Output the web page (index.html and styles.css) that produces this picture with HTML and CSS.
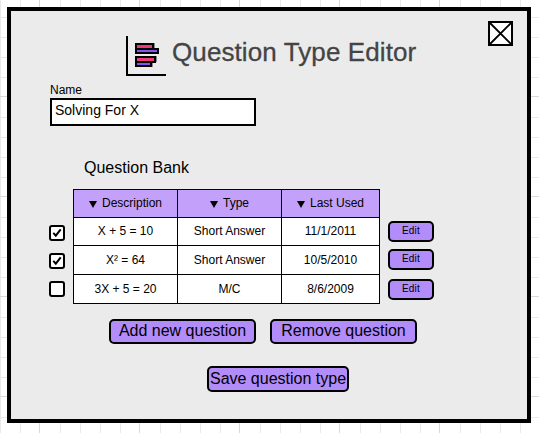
FILE: index.html
```html
<!DOCTYPE html>
<html lang="en">
<head>
<meta charset="utf-8">
<title>Question Type Editor</title>
<link rel="stylesheet" href="styles.css">
</head>
<body>
<main class="window">
  <header class="header">
    <svg class="logo" width="40" height="40" viewBox="0 0 40 40" shape-rendering="crispEdges">
      <path d="M1 0V39H40" fill="none" stroke="#000" stroke-width="2"/>
      <path d="M28 7h1v5h-1zM30 20h1v6h-1zM26 26h1v5h-1z" fill="#8b8787"/>
      <path d="M9 7h19v5h5v6H9zM9 20h21v7h-4v4H9z"/>
      <path d="M11 9h15v3H11zM11 22h17v3H11z" fill="#f03878"/>
      <path d="M11 14h20v2H11zM11 27h13v2H11z" fill="#8a50f5"/>
    </svg>
    <h1 class="title">Question Type Editor</h1>
    <button class="close" aria-label="Close">
      <svg width="25" height="25" viewBox="0 0 25 25"><path d="M1 1h23v23H1z" fill="#fff" stroke="#000" stroke-width="2"/><path d="M2 2l21 21M23 2L2 23" stroke="#000" stroke-width="1.8"/></svg>
    </button>
  </header>

  <label class="field">
    <span class="field-label">Name</span>
    <input class="field-input" type="text" value="Solving For X">
  </label>

  <h2 class="subtitle">Question Bank</h2>
  <section class="bank">
    <div class="checks">
      <span class="check"><svg width="12" height="12" viewBox="0 0 12 12"><path d="M2.3 5.8L4.8 8.6L9.7 2.3" fill="none" stroke="#000" stroke-width="2"/></svg></span>
      <span class="check"><svg width="12" height="12" viewBox="0 0 12 12"><path d="M2.3 5.8L4.8 8.6L9.7 2.3" fill="none" stroke="#000" stroke-width="2"/></svg></span>
      <span class="check"></span>
    </div>
    <div class="table">
      <div class="cell head"><i class="arrow"></i>Description</div>
      <div class="cell head"><i class="arrow"></i>Type</div>
      <div class="cell head"><i class="arrow"></i>Last Used</div>
      <div class="cell">X + 5 = 10</div><div class="cell">Short Answer</div><div class="cell">11/1/2011</div>
      <div class="cell">X² = 64</div><div class="cell">Short Answer</div><div class="cell">10/5/2010</div>
      <div class="cell">3X + 5 = 20</div><div class="cell">M/C</div><div class="cell">8/6/2009</div>
    </div>
    <div class="edits">
      <button class="button edit">Edit</button>
      <button class="button edit">Edit</button>
      <button class="button edit">Edit</button>
    </div>
  </section>

  <div class="actions">
    <button class="button action">Add new question</button>
    <button class="button action">Remove question</button>
  </div>
  <button class="button save">Save question type</button>
</main>
</body>
</html>
```
FILE: styles.css
```css
* { box-sizing: border-box; }

body {
  margin: 0;
  padding: 7px;
  height: 433px;
  overflow: hidden;
  font-family: "Liberation Sans", Arial, sans-serif;
  color: #000;
  background-color: #fff;
  background-image:
    linear-gradient(90deg, #d8d8d8 1px, transparent 1px),
    linear-gradient(#d8d8d8 1px, transparent 1px),
    linear-gradient(90deg, #e9e9e9 1px, transparent 1px, transparent 20px, #e9e9e9 20px, #e9e9e9 21px, transparent 21px, transparent 60px, #e9e9e9 60px, #e9e9e9 61px, transparent 61px, transparent 80px, #e9e9e9 80px, #e9e9e9 81px, transparent 81px),
    linear-gradient(#e9e9e9 1px, transparent 1px, transparent 20px, #e9e9e9 20px, #e9e9e9 21px, transparent 21px, transparent 60px, #e9e9e9 60px, #e9e9e9 61px, transparent 61px, transparent 80px, #e9e9e9 80px, #e9e9e9 81px, transparent 81px);
  background-size: 100px 100%, 100% 100px, 100px 100%, 100% 100px;
  background-position: 39px 0, 0 96px, 0 0, 0 57px;
}

.window {
  display: flex;
  flex-direction: column;
  align-items: flex-start;
  width: 524px;
  height: 416px;
  border: 4px solid #000;
  background: #ebebeb;
}

.header {
  display: flex;
  align-items: flex-start;
  width: 100%;
  height: 72px;
  padding: 10px 14px 0 115px;
}

.logo { flex: none; margin-top: 15px; }

.title {
  margin: 15px 0 0 6px;
  font-size: 26px;
  font-weight: 400;
  line-height: 32px;
  letter-spacing: 0.1px;
  white-space: nowrap;
  color: #444;
  -webkit-text-stroke: 0.3px #444;
}

.close {
  width: 25px;
  height: 25px;
  margin-left: auto;
  padding: 0;
  border: 0;
  background: none;
}

.close svg { display: block; }

.field {
  display: flex;
  flex-direction: column;
  width: 206px;
  height: 43px;
  margin-left: 39px;
}

.field-label { font-size: 12px; line-height: 15px; }

.field-input {
  height: 28px;
  padding: 0 3px 4px;
  border: 2px solid #000;
  border-radius: 0;
  background: #fff;
  font: 14px/20px "Liberation Sans", Arial, sans-serif;
}

.subtitle {
  margin: 32px 0 0 73px;
  height: 31px;
  font-size: 16px;
  font-weight: 400;
  line-height: 20px;
}

.bank {
  display: flex;
  align-items: flex-start;
  height: 115px;
  margin-left: 38px;
}

.checks {
  display: flex;
  flex-direction: column;
  gap: 12px;
  padding: 36px 8px 0 0;
}

.check {
  width: 16px;
  height: 16px;
  border: 2px solid #000;
  border-radius: 3px;
  background: #fff;
}

.check svg { display: block; }

.table {
  display: grid;
  grid-template-columns: 103px 103px 97px;
  grid-template-rows: 27px 27px 28px 28px;
  gap: 1px;
  padding: 1px;
  background: #000;
}

.cell {
  display: flex;
  align-items: center;
  justify-content: center;
  padding-bottom: 1px;
  background: #fff;
  font-size: 12px;
  line-height: 14px;
  white-space: nowrap;
}

.head { background: #c3a1fb; }

.arrow {
  margin: 3px 5px 0 0;
  border: solid transparent;
  border-width: 7px 4px 0;
  border-top-color: #000;
}

.edits {
  display: flex;
  flex-direction: column;
  padding: 32px 0 0 8px;
}

.button {
  padding: 0;
  border: 2px solid #000;
  border-radius: 5px;
  background: #b28cf9;
  color: #000;
  font: 16px/20px "Liberation Sans", Arial, sans-serif;
  white-space: nowrap;
}

.edit {
  width: 46px;
  height: 21px;
  margin-bottom: 7px;
  padding-bottom: 1px;
  font-size: 10px;
  line-height: 14px;
  letter-spacing: 0.2px;
}

.edit:last-child { margin: 2px 0 0; }

.actions {
  display: flex;
  gap: 14px;
  margin: 15px 0 0 98px;
}

.action {
  width: 147px;
  height: 25px;
  padding-bottom: 2px;
}

.save {
  width: 142px;
  height: 26px;
  margin: 22px 0 0 196px;
  padding-bottom: 1px;
}
```
